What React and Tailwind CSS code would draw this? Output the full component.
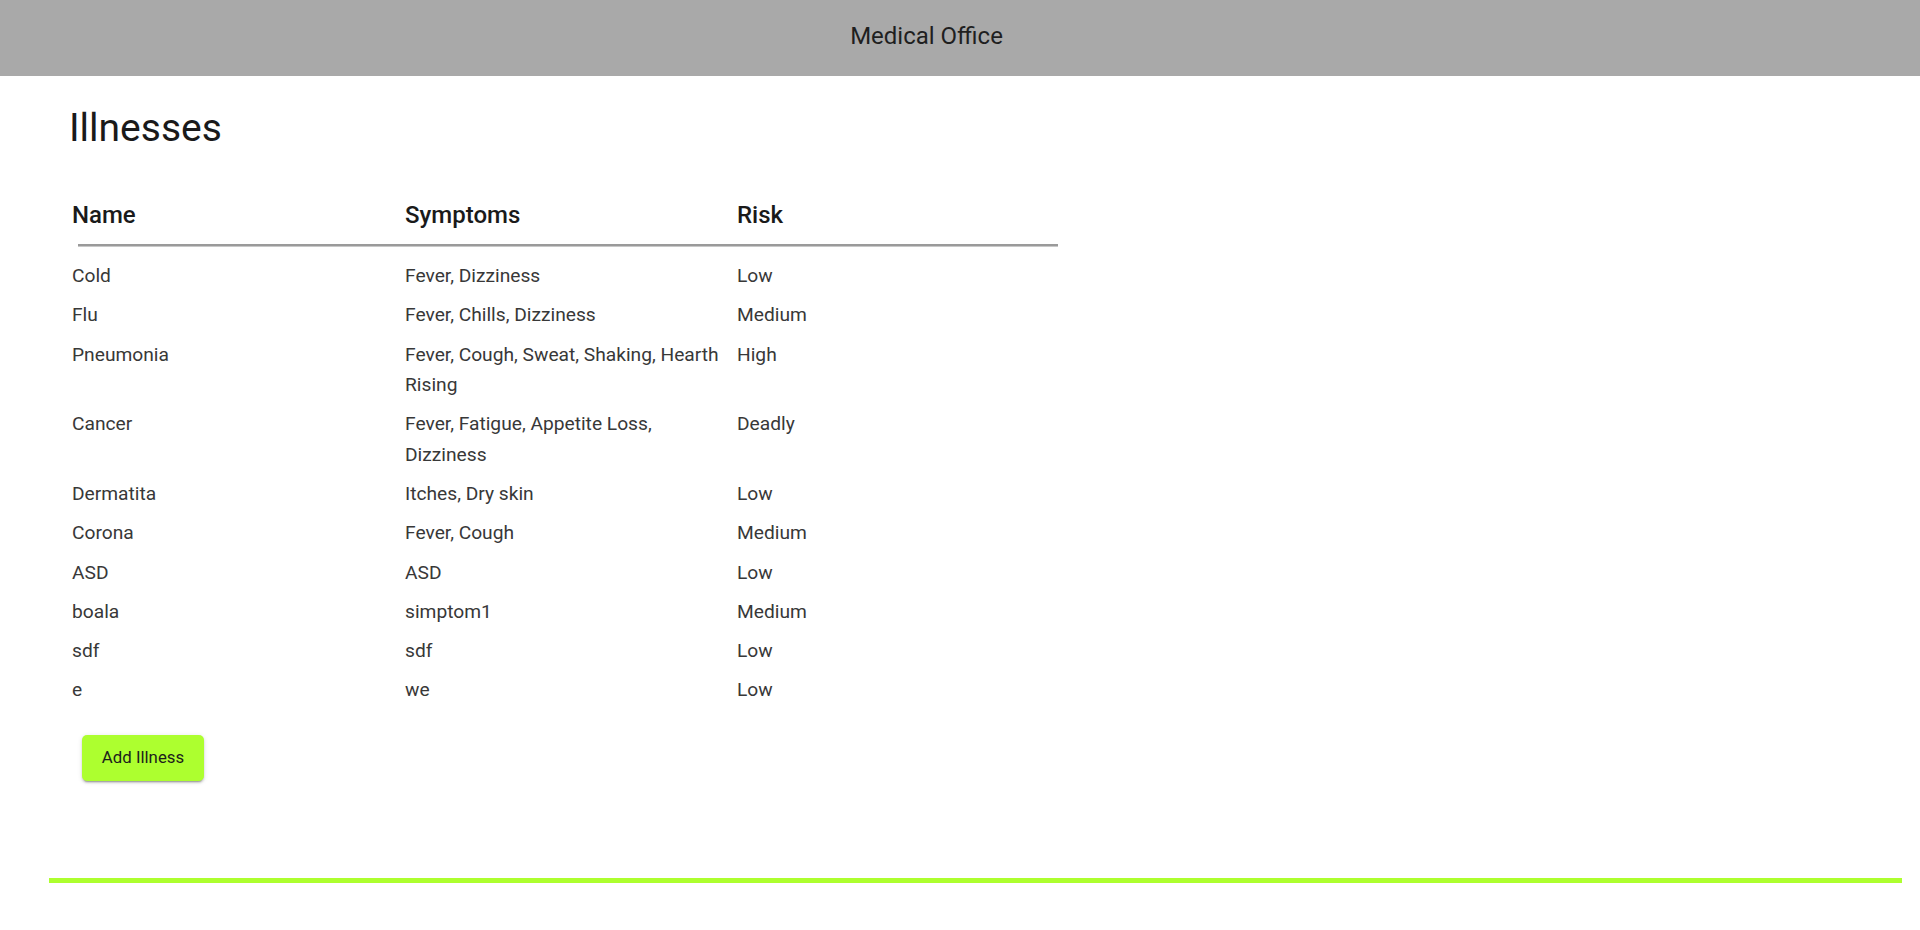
import React from 'react';

const illnesses = [
  { name: 'Cold', symptoms: 'Fever, Dizziness', risk: 'Low' },
  { name: 'Flu', symptoms: 'Fever, Chills, Dizziness', risk: 'Medium' },
  { name: 'Pneumonia', symptoms: 'Fever, Cough, Sweat, Shaking, Hearth Rising', risk: 'High' },
  { name: 'Cancer', symptoms: 'Fever, Fatigue, Appetite Loss, Dizziness', risk: 'Deadly' },
  { name: 'Dermatita', symptoms: 'Itches, Dry skin', risk: 'Low' },
  { name: 'Corona', symptoms: 'Fever, Cough', risk: 'Medium' },
  { name: 'ASD', symptoms: 'ASD', risk: 'Low' },
  { name: 'boala', symptoms: 'simptom1', risk: 'Medium' },
  { name: 'sdf', symptoms: 'sdf', risk: 'Low' },
  { name: 'e', symptoms: 'we', risk: 'Low' },
];

const App = () => {
  return (
    <div className="min-h-screen bg-white font-['Roboto',sans-serif] text-[#212121]">
      <header className="flex h-[76px] justify-center bg-[#a9a9a9] pt-[18px]">
        <span className="pr-[67px] text-[24px] leading-[36px] text-[#1f1f1f]">Medical Office</span>
      </header>

      <main className="pl-[69px]">
        <h1 className="mt-[28px] text-[39px] font-normal leading-[48px] text-[#1a1a1a]">Illnesses</h1>

        <div className="mt-[48px] pl-[3px]">
          <div className="grid grid-cols-[333px_332px_332px] text-[24px] font-medium leading-[30px] text-[#1a1a1a]">
            <div>Name</div>
            <div>Symptoms</div>
            <div>Risk</div>
          </div>
          <div className="ml-[6px] mt-[14px] h-[3px] w-[980px] border-b border-[#c8c8c8] bg-[#9a9a9a]" />

          <div className="mt-[10px] text-[19.2px] leading-[30.6px] text-[#383838]">
            {illnesses.map((item) => (
              <div key={item.name} className="grid grid-cols-[333px_332px_332px] py-[4.3px]">
                <div className="pr-[10px]">{item.name}</div>
                <div className="pr-[10px]">{item.symptoms}</div>
                <div className="pr-[10px]">{item.risk}</div>
              </div>
            ))}
          </div>
        </div>

        <button className="ml-[13px] mt-[25px] h-[46px] w-[122px] rounded-[5px] bg-[#adff2f] text-[16.8px] font-normal text-[#1c1c1c] shadow-[0_3px_1px_-2px_rgba(0,0,0,0.2),0_2px_2px_0_rgba(0,0,0,0.14),0_1px_5px_0_rgba(0,0,0,0.12)]">
          Add Illness
        </button>
      </main>

      <div className="ml-[49px] mt-[97px] h-[5px] w-[1853px] bg-[#adff2f]" />
    </div>
  );
};

export default App;
